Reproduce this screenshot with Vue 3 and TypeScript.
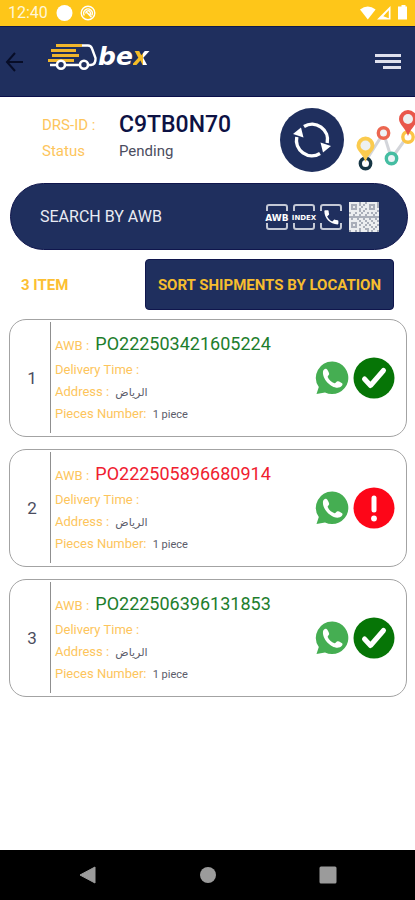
<script setup lang="ts">
import { ref } from 'vue'

interface Shipment {
  awb: string
  address: string
  pieces: string
  state: 'ok' | 'alert'
}

const query = ref('')

const shipments: Shipment[] = [
  { awb: 'PO222503421605224', address: 'الرياض', pieces: '1 piece', state: 'ok' },
  { awb: 'PO222505896680914', address: 'الرياض', pieces: '1 piece', state: 'alert' },
  { awb: 'PO222506396131853', address: 'الرياض', pieces: '1 piece', state: 'ok' },
]

// Modules of the QR scan icon, one string per row.
const qrRows: string[] = [
  '111110110111110',
  '100010101100010',
  '101011011101010',
  '100010110100011',
  '111110101111110',
  '011011011010101',
  '110110110111011',
  '000000000000000',
  '101101101101101',
  '111110110110110',
  '100011011011011',
  '101010110101110',
  '100011101110101',
  '111110110011011',
  '011010111010110',
]
const qrPath: string = qrRows
  .map((row, y) =>
    [...row].map((c, x) => (c === '1' ? `M${x} ${y}h1v1h-1z` : '')).join(''),
  )
  .join('')
</script>

<template>
  <div class="screen">
    <div class="status">
      <span class="clock">12:40</span>
      <svg class="notes" width="42" height="18" viewBox="0 0 42 18" aria-hidden="true">
        <circle cx="8.500" cy="9" r="8" fill="#fff" />
        <g fill="none" stroke="#fff" stroke-width="1.400">
          <circle cx="32" cy="9" r="6.800" />
          <path d="M28.300 11.500a4.300 4.300 0 1 1 7.400 0M30 9.500a2.200 2.200 0 1 1 3 1.600M31 8.500l4.500 4.800" />
        </g>
      </svg>
      <svg class="signals" width="47" height="16" viewBox="0 0 47 16" fill="#fff" aria-hidden="true">
        <path d="M0 4.500Q7.800-1.500 15.600 4.500L7.800 14.500z" />
        <path d="M30.500 1v13.500H17zM28.800 5.200l-5.500 6l5.500 2z" fill-rule="evenodd" />
        <path d="M39.500 1.500h2V0h4v1.500h1.500v13h-9v-13z" />
      </svg>
    </div>

    <header class="topbar">
      <button class="icon-btn" aria-label="Back">
        <svg width="20" height="22" viewBox="0 0 20 22" fill="none" stroke="#070d27" stroke-width="2">
          <path d="M10 2L2 11L10 20M2 11H18" />
        </svg>
      </button>
      <div class="brand">
        <svg width="50" height="30" viewBox="0 0 50 30" fill="none" aria-hidden="true">
          <path d="M8 3.500H34M3 8.500H28M4 13.500H31M0 18.500H26" stroke="#f0b62c" stroke-width="2.800" />
          <path d="M34 3.500h6q3 0 4 3l3.500 9.500q.5 6.500-4.500 7h-2M31 23H18M8 23H2" stroke="#fff" stroke-width="2.400" />
          <circle cx="13" cy="22.800" r="4" stroke="#fff" stroke-width="2.600" />
          <circle cx="36" cy="22.800" r="4" stroke="#fff" stroke-width="2.600" />
        </svg>
        <span class="word">be<span class="word-x">x</span></span>
      </div>
      <button class="icon-btn menu" aria-label="Menu">
        <svg width="26" height="16" viewBox="0 0 26 16" fill="#dfe1ee">
          <path d="M0 0h26v3H0zM0 6h26v3H0zM8 12h18v3H8z" />
        </svg>
      </button>
    </header>

    <main>
      <section class="summary">
        <dl>
          <dt>DRS-ID :</dt>
          <dd class="drs">C9TB0N70</dd>
          <dt>Status</dt>
          <dd>Pending</dd>
        </dl>
        <button class="refresh" aria-label="Refresh">
          <svg width="38" height="38" viewBox="0 0 38 38" fill="none" stroke="#fff" stroke-width="3.400">
            <path d="M11 5.500A15.500 15.500 0 0 1 34.200 22" />
            <path d="M27 32.500A15.500 15.500 0 0 1 3.800 16" />
            <path d="M27.500 21.500L38 25L30 31.500zM10.500 16.500L0 13L8 6.500z" fill="#fff" stroke="none" />
          </svg>
        </button>
        <button class="route" aria-label="Route map">
          <svg width="60" height="68" viewBox="0 0 60 68" fill="none">
            <path d="M12 54L28.500 28L36.500 53.500L52 32" stroke="#d3d5da" stroke-width="3" />
            <circle cx="10.500" cy="58.500" r="5.200" fill="#fff" stroke="#173645" stroke-width="3.400" />
            <circle cx="28.500" cy="28" r="5.200" fill="#eef3f6" stroke="#ec6650" stroke-width="3.400" />
            <circle cx="36.500" cy="53.500" r="5.200" fill="#eef3f6" stroke="#45bda2" stroke-width="3.400" />
            <circle cx="53" cy="32" r="5.200" fill="#fff" stroke="#fbc546" stroke-width="3.400" />
            <path d="M10.500 57C8 49 1.500 46 1.500 40.500a9 9 0 0 1 18 0C19.500 46 13 49 10.500 57z" fill="#fbcb4e" />
            <circle cx="10.500" cy="40.500" r="5" fill="#edf0f0" />
            <path d="M53 31C50.500 23 44 19.500 44 14a9 9 0 0 1 18 0C62 19.500 55.500 23 53 31z" fill="#e9574b" />
            <circle cx="53" cy="14" r="5" fill="#edf0f0" />
          </svg>
        </button>
      </section>

      <form class="search" @submit.prevent>
        <input v-model="query" type="text" placeholder="SEARCH BY AWB" aria-label="Search by AWB" />
        <button type="button" aria-label="Search by AWB number">
          <svg width="24" height="28" viewBox="0 0 24 28">
            <path class="frame" d="M2 8V4q0-2 2-2H20q2 0 2 2V8M2 20v4q0 2 2 2H20q2 0 2-2V20" />
            <text x="12" y="17.500" font-size="9">AWB</text>
          </svg>
        </button>
        <button type="button" aria-label="Search by index">
          <svg width="24" height="28" viewBox="0 0 24 28">
            <path class="frame" d="M2 8V4q0-2 2-2H20q2 0 2 2V8M2 20v4q0 2 2 2H20q2 0 2-2V20" />
            <text x="12" y="16.500" font-size="7">INDEX</text>
          </svg>
        </button>
        <button type="button" aria-label="Search by phone">
          <svg width="24" height="28" viewBox="0 0 24 28">
            <path class="frame" d="M2 8V4q0-2 2-2H20q2 0 2 2V8M2 20v4q0 2 2 2H20q2 0 2-2V20" />
            <path
              fill="#fff"
              transform="translate(3 5) scale(.78)"
              d="M6.600 10.800c1.400 2.800 3.800 5.100 6.600 6.600l2.200-2.200c.3-.3.700-.4 1-.2 1.100.4 2.300.6 3.600.6.600 0 1 .4 1 1V20c0 .6-.4 1-1 1C10.600 21 3 13.400 3 4c0-.6.500-1 1-1h3.500c.6 0 1 .4 1 1 0 1.200.2 2.400.6 3.600.1.300 0 .7-.2 1z"
            />
          </svg>
        </button>
        <button class="qr" type="button" aria-label="Scan code">
          <svg width="30" height="30" viewBox="0 0 15 15">
            <rect width="15" height="15" fill="#a9aeb9" />
            <path :d="qrPath" fill="#eceef0" />
          </svg>
        </button>
      </form>

      <div class="tools">
        <span class="count">{{ shipments.length }} ITEM</span>
        <button class="sort">SORT SHIPMENTS BY LOCATION</button>
      </div>

      <ol class="list">
        <li v-for="(s, i) in shipments" :key="s.awb" class="card">
          <span class="index">{{ i + 1 }}</span>
          <div class="info">
            <p class="awb">AWB : <span :class="['number', s.state]">{{ s.awb }}</span></p>
            <p>Delivery Time :</p>
            <p>Address : <span class="value" lang="ar">{{ s.address }}</span></p>
            <p>Pieces Number: <span class="value">{{ s.pieces }}</span></p>
          </div>
          <button class="icon-btn" aria-label="WhatsApp">
            <svg width="34" height="34" viewBox="0 0 34 34">
              <path d="M17.500.5a16.300 16.300 0 1 1-7.500 31L1.500 33L3.800 26A16.300 16.300 0 0 1 17.500.5z" fill="#45ae52" />
              <path
                fill="#fff"
                d="M8 10.500C8.500 8.500 10 7.500 11.500 8c1 .3 2.700 4 2.700 5s-1.800 2-1.500 3c1 2.800 3.800 5.200 6.800 6.200 1 .2 2-2 3.200-2s4.500 1.700 4.800 2.600c.4 1.500-1.500 3.300-3.500 3.800C17 28 7 18.500 8 10.500z"
              />
            </svg>
          </button>
          <button v-if="s.state === 'ok'" class="icon-btn" aria-label="Delivered">
            <svg width="42" height="42" viewBox="0 0 42 42">
              <circle cx="21" cy="21" r="20.500" fill="#067506" />
              <path d="M11.500 22L17.500 28.500L30.500 13.500" fill="none" stroke="#fff" stroke-width="5" stroke-linecap="round" stroke-linejoin="round" />
            </svg>
          </button>
          <button v-else class="icon-btn" aria-label="Problem">
            <svg width="42" height="42" viewBox="0 0 42 42">
              <circle cx="21" cy="21" r="20.500" fill="#fd0618" />
              <path d="M21 11V23" stroke="#fff" stroke-width="5" stroke-linecap="round" />
              <circle cx="21" cy="31.500" r="2.900" fill="#fff" />
            </svg>
          </button>
        </li>
      </ol>
    </main>

    <nav class="sysnav" aria-label="System">
      <button class="icon-btn" aria-label="System back">
        <svg width="18" height="18" viewBox="0 0 18 18" fill="#9b9b9b">
          <path d="M1 9L16 1v16z" stroke="#9b9b9b" stroke-linejoin="round" />
        </svg>
      </button>
      <button class="icon-btn" aria-label="Home">
        <svg width="18" height="18" viewBox="0 0 18 18" fill="#9b9b9b"><circle cx="9" cy="9" r="8" /></svg>
      </button>
      <button class="icon-btn" aria-label="Recent apps">
        <svg width="18" height="18" viewBox="0 0 18 18" fill="#9b9b9b"><rect x=".5" y=".5" width="17" height="17" rx="1.500" /></svg>
      </button>
    </nav>
  </div>
</template>

<style>
body {
  margin: 0;
  background: #fff;
}
</style>

<style scoped>
.screen {
  display: flex;
  flex-direction: column;
  min-height: 100vh;
  font-family: Roboto, 'DejaVu Sans', sans-serif;
  color: #4b4d60;
}
button {
  padding: 0;
  border: 0;
  background: none;
  font: inherit;
  cursor: pointer;
}
svg {
  display: block;
}
main {
  flex: 1;
}
.icon-btn {
  display: flex;
  flex-shrink: 0;
}
.status {
  display: flex;
  align-items: center;
  height: 26px;
  padding: 0 8px;
  background: #fec619;
}
.clock {
  color: #fff6d8;
  font-size: 16px;
  line-height: 26px;
}
.notes {
  margin-left: 8px;
}
.signals {
  margin-left: auto;
}
.topbar {
  display: flex;
  align-items: center;
  box-sizing: border-box;
  height: 71px;
  padding: 0 14px 0 5px;
  border-top: 1px solid #101b49;
  border-bottom: 1px solid #0a0f4a;
  background: #1f2f5e;
}
.brand {
  display: flex;
  align-items: center;
  margin: 0 auto 10px 23px;
}
.word {
  color: #fff;
  font-family: 'DejaVu Sans', sans-serif;
  font-size: 25px;
  font-style: italic;
  font-weight: 700;
  line-height: 30px;
}
.word-x {
  padding-right: 3px;
  background: linear-gradient(90deg, #f5bc27 52%, #fff 52%);
  background-clip: text;
  color: transparent;
}
.summary {
  display: flex;
  align-items: flex-start;
  height: 75px;
  padding: 11px 0 0 42px;
  overflow: hidden;
}
dl {
  display: grid;
  grid-template-columns: 77px auto;
  align-items: center;
  margin: 4px auto 0 0;
  font-size: 15px;
  line-height: 26px;
}
dt {
  color: #fdc55c;
}
dd {
  margin: 0;
}
.drs {
  color: #0d1244;
  font-size: 23px;
  font-weight: 500;
}
.refresh {
  display: grid;
  place-items: center;
  width: 64px;
  height: 64px;
  border-radius: 50%;
  background: #1f2f5e;
}
.route {
  margin-left: 11px;
  margin-top: -3px;
}
.search {
  display: flex;
  align-items: center;
  gap: 3px;
  box-sizing: border-box;
  height: 67px;
  margin: 0 7px 0 10px;
  padding: 0 28px 0 29px;
  border: 1px solid #10164d;
  border-radius: 34px;
  background: #1f2f5e;
}
.search input {
  flex: 1;
  min-width: 0;
  padding: 0;
  border: 0;
  outline: 0;
  background: none;
  color: #e9ebf3;
  font: 16px Roboto, sans-serif;
}
.search input::placeholder {
  color: #e9ebf3;
  opacity: 1;
}
.search text {
  fill: #fff;
  font-family: 'DejaVu Sans', sans-serif;
  font-weight: 700;
  text-anchor: middle;
}
.search svg {
  overflow: visible;
}
.frame {
  fill: none;
  stroke: #c3c8d5;
  stroke-width: 2;
}
.qr {
  margin-left: 3px;
}
.tools {
  display: flex;
  align-items: center;
  justify-content: space-between;
  padding: 9px 21px;
  font-size: 15px;
  font-weight: 700;
}
.count {
  color: #fcbf33;
}
.sort {
  height: 51px;
  padding: 0 12px;
  border: 1px solid #10164d;
  border-radius: 4px;
  background: #1f2f5e;
  color: #f6bd2f;
}
.list {
  display: flex;
  flex-direction: column;
  gap: 12px;
  margin: 0;
  padding: 0 8px 12px 9px;
  list-style: none;
}
.card {
  display: flex;
  align-items: center;
  gap: 4px;
  box-sizing: border-box;
  min-height: 118px;
  padding: 2px 11px 3px 0;
  border: 1px solid #a3a3a3;
  border-radius: 17px;
}
.index {
  box-sizing: border-box;
  width: 36px;
  padding-left: 8px;
  font-size: 17px;
  text-align: center;
}
.info {
  flex: 1;
  padding: 11px 0 8px 4px;
  border-left: 1px solid #8f8f8f;
  color: #fdc55c;
  font-size: 13px;
}
.info p {
  margin: 0;
  line-height: 22px;
  white-space: nowrap;
}
.info .awb {
  line-height: 26px;
}
.number,
.value {
  margin-left: 3px;
  line-height: 1;
}
.number {
  font-size: 18px;
}
.number.ok {
  color: #1d7d2c;
}
.number.alert {
  color: #f0202f;
}
.value {
  color: #5b5c6a;
  font-size: 11px;
}
.sysnav {
  display: flex;
  align-items: center;
  justify-content: center;
  gap: 102px;
  height: 50px;
  background: #000;
}
</style>
